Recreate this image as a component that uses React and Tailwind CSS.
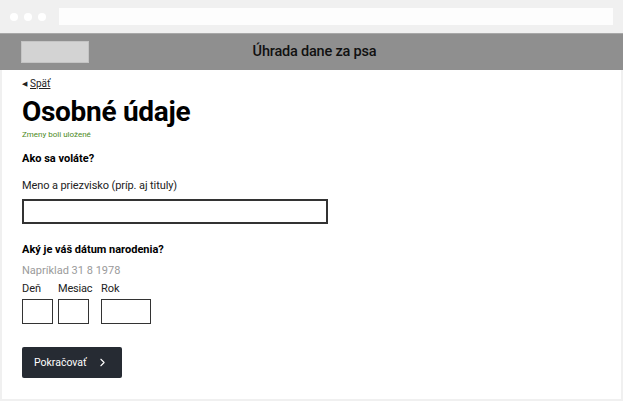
import { ChevronRight } from "lucide-react";

function BrowserBar() {
  return (
    <div className="h-[33px] flex items-center bg-[#f0f0f0]">
      <div className="flex gap-[6px] pl-[10px] w-[59px]">
        <span className="w-[8px] h-[8px] rounded-full bg-white" />
        <span className="w-[8px] h-[8px] rounded-full bg-white" />
        <span className="w-[8px] h-[8px] rounded-full bg-white" />
      </div>
      <div className="h-[17px] w-[554px] bg-[#fdfdfd]" />
    </div>
  );
}

function Header() {
  return (
    <div className="relative h-[37px] flex items-center justify-center bg-[#8f8f8f] border-t border-[#a8a8a8]">
      <div className="absolute left-[21px] top-[7px] w-[68px] h-[22px] bg-[#d3d3d3] border border-[#c4c4c4]" />
      <h1 className="text-[14.5px] font-medium text-[#111] pl-[6px] tracking-[-0.2px]">Úhrada dane za psa</h1>
    </div>
  );
}

function App() {
  return (
    <main className="w-[626px] h-[402px] bg-white font-['Roboto',sans-serif]">
      <div className="w-[623px] h-[401px] flex flex-col bg-[#f0f0f0] px-[2px] pb-[2px]">
        <div className="-mx-[2px]">
          <BrowserBar />
          <Header />
        </div>
        <div className="flex-1 bg-white flex flex-col px-[20px] pt-[7px]">
          <a className="flex items-center gap-[3px] text-[10px] text-[#222] leading-[14px]">
            <span className="text-[7px]">◀</span>
            <span className="underline">Späť</span>
          </a>
          <h2 className="text-[28px] font-bold text-black leading-[32px] mt-[5px] tracking-[-0.3px]">Osobné údaje</h2>
          <p className="text-[8px] text-[#4c8a1c] leading-[12px] mt-[1px]">Zmeny boli uložené</p>
          <p className="text-[11px] font-bold text-black leading-[14px] mt-[11px]">Ako sa voláte?</p>
          <p className="text-[11px] text-[#222] leading-[14px] mt-[13px] tracking-[-0.1px]">Meno a priezvisko (príp. aj tituly)</p>
          <div className="w-[306px] h-[25px] border-2 border-[#333] mt-[6px]" />
          <p className="text-[11px] font-bold text-black leading-[14px] mt-[19px]">Aký je váš dátum narodenia?</p>
          <p className="text-[11px] text-[#9a9a9a] leading-[14px] mt-[7px]">Napríklad 31 8 1978</p>
          <div className="flex mt-[4px]">
            <div className="flex flex-col gap-[3px] w-[36px]">
              <span className="text-[11px] text-[#222] leading-[14px]">Deň</span>
              <div className="w-[31px] h-[25px] border border-[#333]" />
            </div>
            <div className="flex flex-col gap-[3px] w-[43px]">
              <span className="text-[11px] text-[#222] leading-[14px] tracking-[-0.2px]">Mesiac</span>
              <div className="w-[31px] h-[25px] border border-[#333]" />
            </div>
            <div className="flex flex-col gap-[3px]">
              <span className="text-[11px] text-[#222] leading-[14px]">Rok</span>
              <div className="w-[50px] h-[25px] border border-[#333]" />
            </div>
          </div>
          <button className="mt-[23px] w-[100px] h-[31px] bg-[#262b33] rounded-[2px] flex items-center pl-[12px] text-white text-[10.5px]">
            <span>Pokračovať</span>
            <ChevronRight size={13} strokeWidth={2} className="ml-[9px]" />
          </button>
        </div>
      </div>
    </main>
  );
}

export default App;
